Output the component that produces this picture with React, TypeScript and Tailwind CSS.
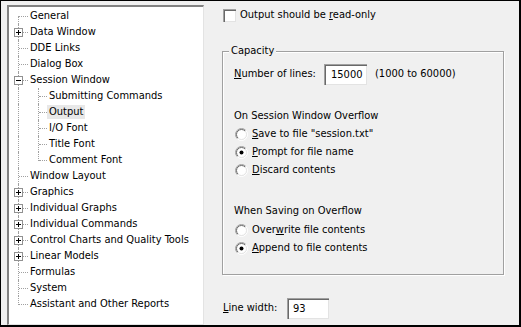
import React from "react";

type Node = { label: string; level: 0 | 1; box?: "plus" | "minus"; last?: boolean; lastChild?: boolean; selected?: boolean };

const tree: Node[] = [
  { label: "General", level: 0 },
  { label: "Data Window", level: 0, box: "plus" },
  { label: "DDE Links", level: 0 },
  { label: "Dialog Box", level: 0 },
  { label: "Session Window", level: 0, box: "minus" },
  { label: "Submitting Commands", level: 1 },
  { label: "Output", level: 1, selected: true },
  { label: "I/O Font", level: 1 },
  { label: "Title Font", level: 1 },
  { label: "Comment Font", level: 1, lastChild: true },
  { label: "Window Layout", level: 0 },
  { label: "Graphics", level: 0, box: "plus" },
  { label: "Individual Graphs", level: 0, box: "plus" },
  { label: "Individual Commands", level: 0, box: "plus" },
  { label: "Control Charts and Quality Tools", level: 0, box: "plus" },
  { label: "Linear Models", level: 0, box: "plus" },
  { label: "Formulas", level: 0 },
  { label: "System", level: 0 },
  { label: "Assistant and Other Reports", level: 0, last: true },
];

// точечные линии дерева
const vDots = "absolute w-0 border-l border-dotted border-[#a0a0a0]";
const hDots = "absolute h-0 border-t border-dotted border-[#a0a0a0] top-[8px]";

function TreeRow({ node, first }: { node: Node; first: boolean }) {
  return (
    <div className="relative h-4 flex items-center">
      {/* вертикаль верхнего уровня */}
      <span
        className={`${vDots} left-[9px] ${first ? "top-[8px] h-[8px]" : node.last ? "top-0 h-[9px]" : "top-0 h-4"}`}
      />
      {node.level === 1 && (
        <span className={`${vDots} left-[29px] top-0 ${node.lastChild ? "h-[9px]" : "h-4"}`} />
      )}
      {node.level === 0 ? (
        <span className={`${hDots} left-[10px] w-[9px]`} />
      ) : (
        <span className={`${hDots} left-[30px] w-[8px]`} />
      )}
      {node.box && (
        <span className="absolute left-[5px] top-[4px] w-[9px] h-[9px] border border-[#919191] bg-white flex items-center justify-center">
          <span className="relative block w-[5px] h-[5px]">
            <span className="absolute left-0 top-[2px] w-[5px] h-[1px] bg-black" />
            {node.box === "plus" && <span className="absolute left-[2px] top-0 w-[1px] h-[5px] bg-black" />}
          </span>
        </span>
      )}
      <span
        className={`h-[14px] leading-[14px] px-[2px] whitespace-nowrap ${node.level === 0 ? "ml-[19px]" : "ml-[38px]"} ${
          node.selected ? "bg-[#e8e8e8]" : ""
        }`}
      >
        {node.label}
      </span>
    </div>
  );
}

function Radio({ checked }: { checked?: boolean }) {
  return (
    <svg width="13" height="13" viewBox="0 0 13 13" className="shrink-0">
      <defs>
        <linearGradient id="ro" x1="0" y1="0" x2="1" y2="1">
          <stop offset="0.45" stopColor="#a0a0a0" />
          <stop offset="0.55" stopColor="#ffffff" />
        </linearGradient>
        <linearGradient id="ri" x1="0" y1="0" x2="1" y2="1">
          <stop offset="0.45" stopColor="#696969" />
          <stop offset="0.55" stopColor="#e3e3e3" />
        </linearGradient>
      </defs>
      <circle cx="6.5" cy="6.5" r="6" fill="none" stroke="url(#ro)" strokeWidth="1" />
      <circle cx="6.5" cy="6.5" r="5" fill="#fff" stroke="url(#ri)" strokeWidth="1" />
      {checked && <circle cx="6.5" cy="6.5" r="2" fill="#000" />}
    </svg>
  );
}

function RadioRow({ checked, children }: { checked?: boolean; children: React.ReactNode }) {
  return (
    <div className="h-[18px] flex items-center ml-[1px]">
      <Radio checked={checked} />
      <span className="ml-[4px] whitespace-nowrap">{children}</span>
    </div>
  );
}

const sunken =
  "bg-white border-t border-l border-[#a0a0a0] border-r-white border-b-white shadow-[inset_1px_1px_0_#696969,inset_-1px_-1px_0_#e3e3e3]";

export default function App() {
  return (
    <div className="w-[521px] h-[327px] bg-[#f0f0f0] border-t border-l border-r-2 border-b-2 border-black flex text-[11px] text-black [font-family:'DejaVu_Sans_Condensed','Liberation_Sans',sans-serif]">
      {/* Дерево разделов */}
      <div className="ml-[6px] mt-[4px] w-[197px] bg-white border-t-2 border-l-2 border-t-[#828282] border-l-[#828282] border-r border-b border-r-[#e3e3e3] border-b-[#e3e3e3] pt-[1px] overflow-hidden">
        {tree.map((n, i) => (
          <TreeRow key={n.label} node={n} first={i === 0} />
        ))}
      </div>

      {/* Параметры вывода */}
      <div className="flex-1 pl-[18px] pt-[8px] flex flex-col">
        <div className="h-[13px] flex items-center ml-[1px]">
          <span className={`w-[13px] h-[13px] ${sunken}`} />
          <span className="ml-[4px]">
            Output should be <u>r</u>ead-only
          </span>
        </div>

        <div className="mt-[29px] w-[282px] h-[224px] border border-[#a0a0a0] shadow-[1px_1px_0_#fff,inset_1px_1px_0_#fff] flex flex-col pl-[11px]">
          <div className="-mt-[8px] h-[14px] leading-[14px] -ml-[5px] px-[2px] bg-[#f0f0f0] self-start">Capacity</div>

          <div className="mt-[6px] h-[21px] flex items-center">
            <span className="w-[90px]">
              <u>N</u>umber of lines:
            </span>
            <span className={`w-[43px] h-[21px] pl-[6px] flex items-center ${sunken}`}>15000</span>
            <span className="ml-[8px]">(1000 to 60000)</span>
          </div>

          <div className="mt-[24px] h-[14px] leading-[14px]">On Session Window Overflow</div>
          <div className="mt-[2px]">
            <RadioRow>
              <u>S</u>ave to file "session.txt"
            </RadioRow>
            <RadioRow checked>
              <u>P</u>rompt for file name
            </RadioRow>
            <RadioRow>
              <u>D</u>iscard contents
            </RadioRow>
          </div>

          <div className="mt-[25px] h-[14px] leading-[14px]">When Saving on Overflow</div>
          <div className="mt-[3px]">
            <RadioRow>
              Over<u>w</u>rite file contents
            </RadioRow>
            <RadioRow checked>
              <u>A</u>ppend to file contents
            </RadioRow>
          </div>
        </div>

        <div className="mt-[23px] h-[21px] flex items-center ml-[1px]">
          <span className="w-[64px]">
            <u>L</u>ine width:
          </span>
          <span className={`w-[42px] h-[21px] pl-[5px] flex items-center ${sunken}`}>93</span>
        </div>
      </div>
    </div>
  );
}
